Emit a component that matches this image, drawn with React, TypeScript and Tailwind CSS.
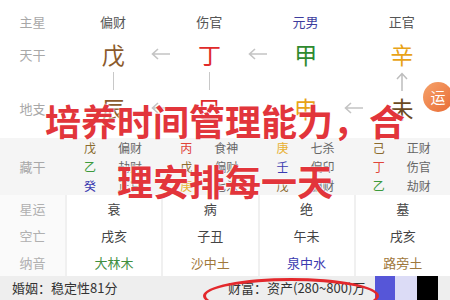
import React from 'react'

const font = { fontFamily: '"Noto Sans CJK SC", "Noto Sans", sans-serif' }

function LeftArrow() {
  return (
    <svg width="20" height="12" viewBox="0 0 20 12" className="absolute -left-[10px] top-1/2 -translate-y-1/2">
      <path d="M19 6H2M7 1L1.5 6L7 11" fill="none" stroke="#c4c4c4" strokeWidth="1.6" />
    </svg>
  )
}

function UpArrow() {
  return (
    <svg width="12" height="20" viewBox="0 0 12 20">
      <path d="M6 19V2M1 7L6 1.5L11 7" fill="none" stroke="#bdbdbd" strokeWidth="1.5" />
    </svg>
  )
}

const hidden = [
  [
    ['戊', 'text-[#8b6b2e]', '偏财'],
    ['乙', 'text-[#3c9a3c]', '劫财'],
    ['癸', 'text-[#3b3bb0]', '正官'],
  ],
  [
    ['丙', 'text-[#e0453a]', '食神'],
    ['戊', 'text-[#8b6b2e]', '偏财'],
    ['庚', 'text-[#e8b030]', '七杀'],
  ],
  [
    ['庚', 'text-[#e8b030]', '七杀'],
    ['壬', 'text-[#3b3bb0]', '偏印'],
    ['戊', 'text-[#8b6b2e]', '偏财'],
  ],
  [
    ['己', 'text-[#8b6b2e]', '正财'],
    ['丁', 'text-[#e0453a]', '伤官'],
    ['乙', 'text-[#3c9a3c]', '劫财'],
  ],
]

const lower = [
  { label: '星运', items: [['衰', 'text-[#444]'], ['病', 'text-[#444]'], ['绝', 'text-[#444]'], ['墓', 'text-[#444]']] },
  { label: '空亡', items: [['戌亥', 'text-[#444]'], ['子丑', 'text-[#444]'], ['午未', 'text-[#444]'], ['戌亥', 'text-[#444]']] },
  { label: '纳音', items: [['大林木', 'text-[#3f8f3f]'], ['沙中土', 'text-[#a0783c]'], ['泉中水', 'text-[#3b3bb0]'], ['路旁土', 'text-[#a0783c]']] },
]

export default function App() {
  return (
    <div className="relative w-[450px] h-[300px] overflow-hidden bg-white" style={font}>
      {/* 主星 */}
      <div className="grid grid-cols-[65px_repeat(4,1fr)] h-[30px] mt-[7px] items-center text-[13px]">
        <div className="text-center text-[#a8a8a8]">主星</div>
        <div className="text-center text-[#555]">偏财</div>
        <div className="text-center text-[#555]">伤官</div>
        <div className="text-center text-[#3d3d9e]">元男</div>
        <div className="text-center text-[#555]">正官</div>
      </div>

      {/* 天干 */}
      <div className="grid grid-cols-[65px_repeat(4,1fr)] h-[30px] items-center">
        <div className="text-center text-[13px] text-[#a8a8a8]">天干</div>
        <div className="text-center text-[23px] text-[#8b5a2b]">戊</div>
        <div className="relative text-center text-[23px] text-[#e02a2a]">
          <LeftArrow />丁
        </div>
        <div className="relative text-center text-[23px] text-[#2f8a2f]">
          <LeftArrow />甲
        </div>
        <div className="text-center text-[23px] text-[#e8a317]">辛</div>
      </div>

      {/* connectors */}
      <div className="grid grid-cols-[65px_repeat(4,1fr)] h-[24px] pt-[5px]">
        <div />
        <div className="flex justify-center"><div className="w-px h-[18px] bg-[#c8c8c8]" /></div>
        <div className="flex justify-center"><div className="w-px h-[18px] bg-[#c8c8c8]" /></div>
        <div />
        <div className="flex justify-center"><UpArrow /></div>
      </div>

      {/* 地支 */}
      <div className="grid grid-cols-[65px_repeat(4,1fr)] h-[25px] items-center">
        <div className="text-center text-[13px] text-[#a8a8a8]">地支</div>
        <div className="text-center text-[23px] text-[#8b5a2b]">辰</div>
        <div className="relative text-center text-[23px] text-[#e02a2a]">
          <LeftArrow />巳
        </div>
        <div className="text-center text-[23px] text-[#e8a317]">申</div>
        <div className="relative text-center text-[23px] text-[#6b4a1f]">
          <LeftArrow />未
        </div>
      </div>

      {/* 藏干 */}
      <div className="grid grid-cols-[65px_repeat(4,1fr)] mt-[22px] bg-[#f5f5f5] h-[57px]">
        <div className="flex items-center justify-center text-[13px] text-[#a8a8a8]">藏干</div>
        {hidden.map((col, i) => (
          <div key={i} className="flex flex-col">
            {col.map(([stem, color, god], j) => (
              <div key={j} className="flex h-[19px] items-center text-[12px]">
                <span className={`w-[50px] text-center ${color}`}>{stem}</span>
                <span className="ml-[3px] text-[#666]">{god}</span>
              </div>
            ))}
          </div>
        ))}
      </div>

      {/* 星运 / 空亡 / 纳音 */}
      <div className="grid grid-cols-[65px_repeat(4,1fr)] gap-x-[2px] bg-[#f0f0f0]">
        {lower.map((row) => (
          <React.Fragment key={row.label}>
            <div className="h-[27px] flex items-center justify-center text-[13px] text-[#b0b0b0] bg-[#fafafa]">
              {row.label}
            </div>
            {row.items.map(([t, c], k) => (
              <div key={k} className={`h-[27px] flex items-center justify-center text-[13px] bg-white ${c}`}>
                {t}
              </div>
            ))}
          </React.Fragment>
        ))}
      </div>

      {/* bottom bar */}
      <div className="flex h-[24px] items-center bg-[#eeeeee] text-[13px] text-[#333]">
        <span className="ml-[12px] w-[216px]">婚姻：稳定性81分</span>
        <span className="w-[147px]">财富：资产(280~800)万</span>
        <div className="w-[20px] h-full bg-[#5656d8]" />
        <div className="w-[22px] h-full bg-[#dcdcf6]" />
        <div className="w-[21px] h-full bg-black" />
      </div>

      {/* 运 button */}
      <div className="absolute left-[423px] top-[82px] w-[30px] h-[30px] rounded-full bg-gradient-to-br from-[#f5a26a] to-[#e86a32] flex items-center justify-center text-white text-[15px]">
        运
      </div>

      {/* red ellipse annotation */}
      <div className="absolute left-[203px] top-[278px] w-[176px] h-[36px] rounded-[50%] border-[3px] border-[#e3282c]" />

      {/* overlay caption */}
      <div className="absolute left-0 right-0 top-[90px] text-center text-[36px] leading-[60px] font-bold text-[#e2353b] [text-shadow:0_0_2px_#fff,0_0_2px_#fff]">
        <div>培养时间管理能力，合</div>
        <div>理安排每一天</div>
      </div>
    </div>
  )
}
